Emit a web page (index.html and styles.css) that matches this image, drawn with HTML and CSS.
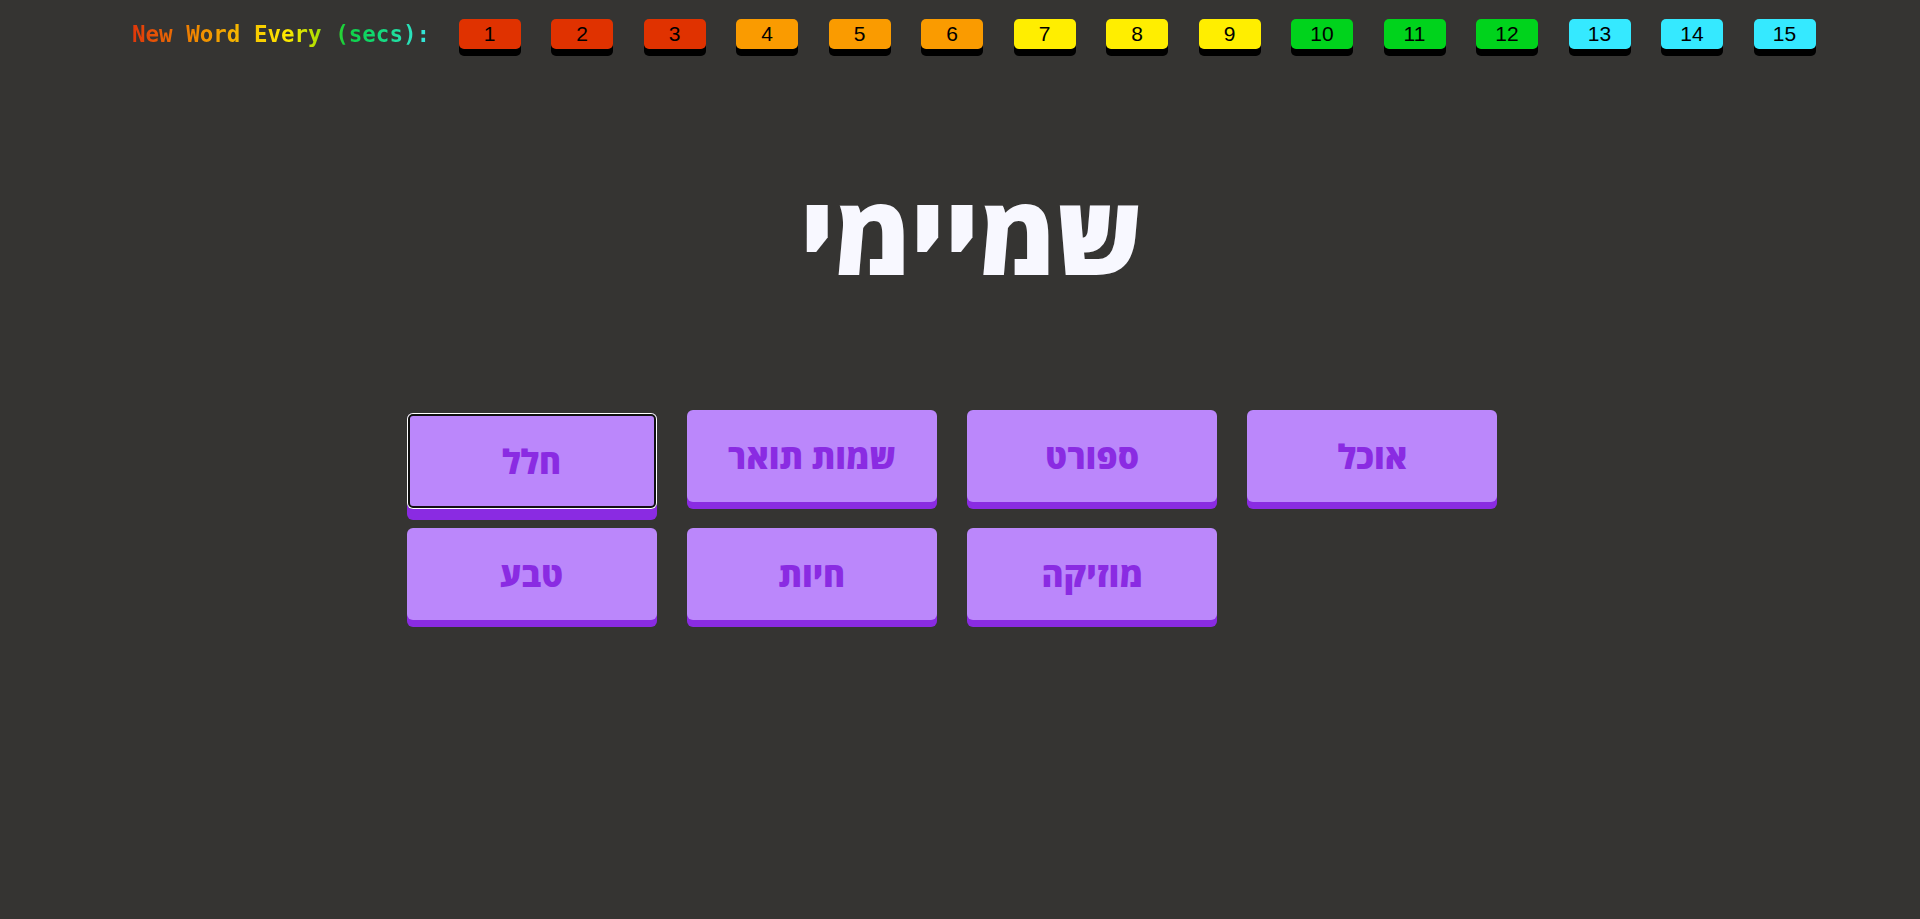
FILE: index.html
```html
<!DOCTYPE html>
<html lang="he">
<head>
<meta charset="utf-8">
<title>New Word Every</title>
<link rel="stylesheet" href="styles.css">
</head>
<body>
<div class="topbar">
  <span class="label">New Word Every (secs):</span>
  <button class="sec red">1</button>
  <button class="sec red">2</button>
  <button class="sec red">3</button>
  <button class="sec orange">4</button>
  <button class="sec orange">5</button>
  <button class="sec orange">6</button>
  <button class="sec yellow">7</button>
  <button class="sec yellow">8</button>
  <button class="sec yellow">9</button>
  <button class="sec green">10</button>
  <button class="sec green">11</button>
  <button class="sec green">12</button>
  <button class="sec cyan">13</button>
  <button class="sec cyan">14</button>
  <button class="sec cyan">15</button>
</div>
<div class="word-wrap">
  <h1 class="word" dir="rtl">שמיימי</h1>
</div>
<div class="cats">
  <button class="cat selected" dir="rtl">חלל</button>
  <button class="cat" dir="rtl">שמות תואר</button>
  <button class="cat" dir="rtl">ספורט</button>
  <button class="cat" dir="rtl">אוכל</button>
  <button class="cat" dir="rtl">טבע</button>
  <button class="cat" dir="rtl">חיות</button>
  <button class="cat" dir="rtl">מוזיקה</button>
</div>
</body>
</html>
```
FILE: styles.css
```css
html, body {
  margin: 0;
  padding: 0;
  height: 100%;
}
body {
  background: #353432;
  overflow: hidden;
}
.topbar {
  display: flex;
  align-items: center;
  gap: 30.5px;
  padding: 19px 0 0 132px;
  height: 30px;
}
.label {
  flex: none;
  width: 296px;
  font-family: "DejaVu Sans Mono", monospace;
  font-weight: bold;
  font-size: 22.5px;
  white-space: pre;
  background: linear-gradient(90deg, #e0360a 0%, #f08a00 22%, #f7c400 40%, #ffe800 52%, #b6e000 62%, #10d040 72%, #10d870 82%, #36e6e0 100%);
  -webkit-background-clip: text;
  background-clip: text;
  color: transparent;
}
.sec {
  width: 62px;
  height: 30px;
  padding: 0;
  border: none;
  border-radius: 5px;
  font-family: "Liberation Sans", Arial, sans-serif;
  font-size: 21px;
  color: #000;
  box-shadow: 0 7px 0 #000;
  flex: none;
  cursor: pointer;
}
.red { background: #e03200; }
.orange { background: #fa9b00; }
.yellow { background: #ffee00; }
.green { background: #00d31c; }
.cyan { background: #35e9ff; }

.word-wrap {
  display: flex;
  justify-content: center;
  padding-left: 22px;
}
.word {
  margin: 118px 0 0 0;
  font-family: "Open Sans", "DejaVu Sans", sans-serif;
  font-weight: 800;
  font-size: 110px;
  line-height: 130px;
  color: #f8f8ff;
}
.cats {
  display: grid;
  grid-template-columns: repeat(4, 250px);
  grid-auto-rows: 92px;
  column-gap: 30.3px;
  row-gap: 26px;
  margin-top: 113px;
  padding-left: 406.5px;
}
.cat {
  height: 92px;
  padding: 0;
  border: none;
  border-radius: 6px;
  background: #bb87fb;
  color: #8a2be2;
  font-family: "Open Sans", "DejaVu Sans", sans-serif;
  font-weight: 800;
  font-size: 33.5px;
  box-shadow: 0 7px 0 #8a2be2;
  cursor: pointer;
}
.cat.selected {
  margin-top: 3px;
  height: 96px;
  box-shadow: inset 0 0 0 1px #fff, inset 0 0 0 3px #111, 0 11px 0 #8a2be2;
}
```
